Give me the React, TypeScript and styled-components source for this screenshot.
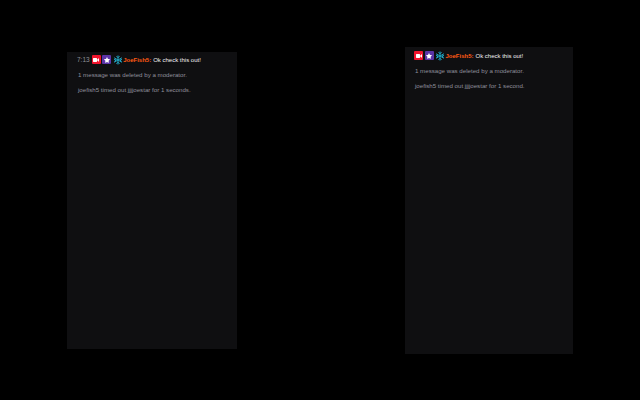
import styled, { createGlobalStyle } from "styled-components";
import { FaStar, FaVideo } from "react-icons/fa";

const GlobalStyle = createGlobalStyle`
  html, body {
    margin: 0;
    padding: 0;
    background-color: #000;
  }
`;

const Page = styled.div`
  width: 640px;
  height: 400px;
  padding: 0 67px;
  box-sizing: border-box;
  display: flex;
  align-items: center;
  justify-content: space-between;
  overflow: hidden;
`;

const ChatPanel = styled.div<{ $width: number; $height: number; $top: number; $left: number }>`
  width: ${(props) => props.$width}px;
  height: ${(props) => props.$height}px;
  box-sizing: border-box;
  padding: ${(props) => props.$top}px 10px 0 ${(props) => props.$left}px;
  background-color: #0f0f11;
  font-family: "Liberation Sans", Arial, sans-serif;
  font-size: 6.15px;
`;

const ChatRow = styled.div`
  display: flex;
  align-items: center;
  height: 12px;
  font-size: 6px;
  white-space: nowrap;
`;

const Time = styled.span`
  color: #8f8f96;
  font-size: 6.5px;
  margin-right: 2px;
`;

const Badge = styled.span<{ $color: string }>`
  width: 9px;
  height: 9px;
  margin-right: 1.5px;
  border-radius: 1px;
  display: flex;
  align-items: center;
  justify-content: center;
  color: #fff;
  background-color: ${(props) => props.$color};
`;

const Snowflake = styled.svg`
  width: 10px;
  height: 10px;
  margin-right: 0.5px;
`;

const UserName = styled.span`
  color: #ff5a14;
  font-weight: 700;
`;

const Message = styled.span`
  color: #efeff1;
  margin-left: 2px;
`;

const Notice = styled.div`
  color: #90909c;
  height: 8px;
  line-height: 8px;
  margin: 5px 0 0 1px;
  white-space: nowrap;

  & + & {
    margin-top: 7px;
  }
`;

function ModeratorFlake() {
  return (
    <Snowflake viewBox="0 0 20 20" fill="none" stroke="#1fa7c4" strokeWidth="2">
      <path d="M10 1v18M2.2 5.5l15.6 9M2.2 14.5l15.6-9" />
      <path d="M7 2.5l3 3 3-3M7 17.5l3-3 3 3M2 9l4 1-3 3M18 9l-4 1 3 3" />
    </Snowflake>
  );
}

function ChatLine({ time }: { time?: string }) {
  return (
    <ChatRow>
      {time && <Time>{time}</Time>}
      <Badge $color="#f0142d">
        <FaVideo size={6} />
      </Badge>
      <Badge $color="#5b34a8">
        <FaStar size={6} />
      </Badge>
      <ModeratorFlake />
      <UserName>JoeFish5:</UserName>
      <Message>Ok check this out!</Message>
    </ChatRow>
  );
}

export default function App() {
  return (
    <>
      <GlobalStyle />
      <Page>
        <ChatPanel $width={170} $height={297} $top={2} $left={10}>
          <ChatLine time="7:13" />
          <Notice>1 message was deleted by a moderator.</Notice>
          <Notice>joefish5 timed out jjjjoestar for 1 seconds.</Notice>
        </ChatPanel>
        <ChatPanel $width={168} $height={307} $top={3} $left={9}>
          <ChatLine />
          <Notice>1 message was deleted by a moderator.</Notice>
          <Notice>joefish5 timed out jjjjoestar for 1 second.</Notice>
        </ChatPanel>
      </Page>
    </>
  );
}
